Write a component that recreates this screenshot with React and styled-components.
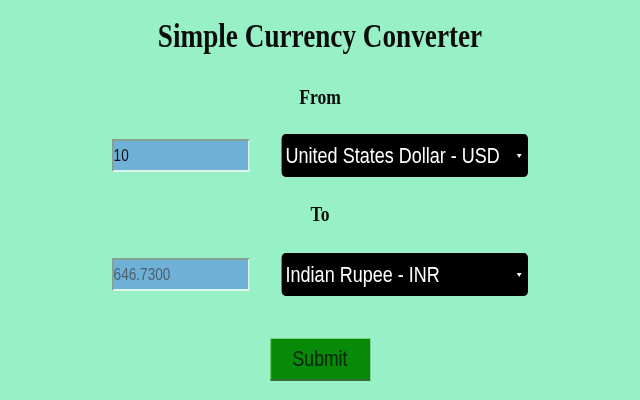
import React, { useState } from "react";
import styled, { createGlobalStyle } from "styled-components";

const GlobalStyle = createGlobalStyle`
  html, body {
    margin: 0;
    padding: 0;
    background: #97f0c6;
  }
  body {
    width: 640px;
    height: 400px;
    overflow: hidden;
  }
`;

// the page reads as an 800px wide layout squeezed into 640px
const Stage = styled.div`
  width: 800px;
  transform: scaleX(0.8);
  transform-origin: 0 0;
  display: flex;
  flex-direction: column;
  align-items: center;
  padding-top: 16px;
`;

const Title = styled.h1`
  margin: 0;
  font-family: "Liberation Serif", "Times New Roman", serif;
  font-weight: bold;
  font-size: 34px;
  line-height: 40px;
  color: #0d0d0d;
`;

const Label = styled.h3`
  margin: ${(p) => p.$top}px 0 0;
  font-family: "Liberation Serif", "Times New Roman", serif;
  font-weight: bold;
  font-size: 22px;
  line-height: 26px;
  color: #0d0d0d;
`;

const Row = styled.div`
  margin-top: ${(p) => p.$top}px;
  display: flex;
  align-items: center;
  gap: 40px;
  height: 43px;
`;

const AmountInput = styled.input`
  box-sizing: border-box;
  width: 172px;
  height: 33px;
  margin: 0;
  padding: 0;
  background: #6fb1d6;
  border-style: solid;
  border-width: 2px;
  border-color: #86a090 #dcf6ea #dcf6ea #86a090;
  font-family: "Liberation Sans", Arial, sans-serif;
  font-size: 17px;
  color: ${(p) => (p.readOnly ? "#4c5f6c" : "#111")};
  outline: none;
`;

const SelectWrap = styled.div`
  position: relative;
  width: 308px;
  height: 43px;

  &::after {
    content: "";
    position: absolute;
    right: 8px;
    top: 20px;
    border-left: 3px solid transparent;
    border-right: 3px solid transparent;
    border-top: 4px solid #fff;
    pointer-events: none;
  }
`;

const CurrencySelect = styled.select`
  appearance: none;
  -webkit-appearance: none;
  box-sizing: border-box;
  width: 100%;
  height: 100%;
  margin: 0;
  padding: 0 24px 0 5px;
  background: #000;
  color: #fff;
  border: none;
  border-radius: 5px;
  font-family: "Liberation Sans", Arial, sans-serif;
  font-size: 22.5px;
  outline: none;
`;

const SubmitButton = styled.button`
  margin-top: 42px;
  box-sizing: border-box;
  width: 125px;
  height: 43px;
  background: #078a07;
  color: #0a260a;
  border-style: solid;
  border-width: 1px 1px 2px 1px;
  border-color: #7fd07f #2d6a2d #3a6a3a #7fd07f;
  font-family: "Liberation Sans", Arial, sans-serif;
  font-size: 22px;
  cursor: pointer;
`;

const currencies = [
  { code: "USD", name: "United States Dollar" },
  { code: "INR", name: "Indian Rupee" },
  { code: "EUR", name: "Euro" },
  { code: "GBP", name: "British Pound" },
];

export default function App() {
  const [amount, setAmount] = useState("10");
  const [from, setFrom] = useState("USD");
  const [to, setTo] = useState("INR");

  return (
    <>
      <GlobalStyle />
      <Stage>
        <Title>Simple Currency Converter</Title>
        <Label $top={28}>From</Label>
        <Row $top={24}>
          <AmountInput value={amount} onChange={(e) => setAmount(e.target.value)} />
          <SelectWrap>
            <CurrencySelect value={from} onChange={(e) => setFrom(e.target.value)}>
              {currencies.map((c) => (
                <option key={c.code} value={c.code}>{c.name} - {c.code}</option>
              ))}
            </CurrencySelect>
          </SelectWrap>
        </Row>
        <Label $top={24}>To</Label>
        <Row $top={26}>
          <AmountInput readOnly value="646.7300" />
          <SelectWrap>
            <CurrencySelect value={to} onChange={(e) => setTo(e.target.value)}>
              {currencies.map((c) => (
                <option key={c.code} value={c.code}>{c.name} - {c.code}</option>
              ))}
            </CurrencySelect>
          </SelectWrap>
        </Row>
        <SubmitButton>Submit</SubmitButton>
      </Stage>
    </>
  );
}
